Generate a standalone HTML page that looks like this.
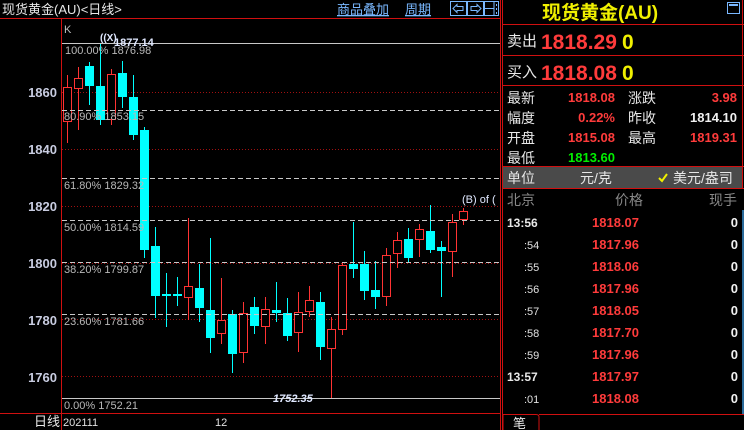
<!DOCTYPE html>
<html><head><meta charset="utf-8"><style>
html,body{margin:0;padding:0;background:#000;width:744px;height:430px;overflow:hidden}
svg{display:block}
text{font-family:"Liberation Sans","Noto Sans CJK SC",sans-serif}
.cn{font-family:"Liberation Sans","Noto Sans CJK SC",sans-serif}
</style></head><body>
<svg width="744" height="430" viewBox="0 0 744 430" xmlns="http://www.w3.org/2000/svg">
<rect width="744" height="430" fill="#000"/>
<!-- header left -->
<text x="2" y="14" fill="#e8e8e8" font-size="13" class="cn">现货黄金(AU)&lt;日线&gt;</text>
<text x="337" y="14" fill="#7ab8ff" font-size="13" class="cn" text-decoration="underline">商品叠加</text>
<text x="405" y="14" fill="#7ab8ff" font-size="13" class="cn" text-decoration="underline">周期</text>
<g fill="none" stroke="#7ab8ff" stroke-width="1">
<rect x="450.5" y="1.5" width="16" height="14"/>
<rect x="467.5" y="1.5" width="16" height="14"/>
<rect x="484.5" y="1.5" width="14" height="14"/>
<path d="M453 8.5 L457 4.5 V6.5 H463 V10.5 H457 V12.5 Z"/>
<path d="M481 8.5 L477 4.5 V6.5 H471 V10.5 H477 V12.5 Z"/>
<path d="M485 8.5 H494 M494 2 V15"/>
<path d="M496.5 4 V6 M496.5 8 V10 M496.5 12 V14"/>
</g>
<!-- frames -->
<line x1="0" y1="18.5" x2="500" y2="18.5" stroke="#d01010"/>
<line x1="61.5" y1="19" x2="61.5" y2="430" stroke="#d01010"/>
<line x1="0" y1="413.5" x2="500" y2="413.5" stroke="#d01010"/>
<line x1="500.5" y1="0" x2="500.5" y2="430" stroke="#d01010"/>
<line x1="502.5" y1="0" x2="502.5" y2="430" stroke="#d01010"/>
<!-- price grid -->
<g stroke="#a01010" stroke-dasharray="1,2">
<line x1="62" y1="92.5" x2="500" y2="92.5"/>
<line x1="62" y1="149.5" x2="500" y2="149.5"/>
<line x1="62" y1="206.5" x2="500" y2="206.5"/>
<line x1="62" y1="263.5" x2="500" y2="263.5"/>
<line x1="62" y1="319.5" x2="500" y2="319.5"/>
<line x1="62" y1="376.5" x2="500" y2="376.5"/>
</g>
<g fill="#c8cce0" font-size="13" font-weight="bold" text-anchor="end">
<text x="57" y="97">1860</text><text x="57" y="154">1840</text><text x="57" y="211">1820</text>
<text x="57" y="268">1800</text><text x="57" y="325">1780</text><text x="57" y="382">1760</text>
</g>
<text x="64" y="33" fill="#c0c0c0" font-size="11">K</text>
<!-- candles -->
<g stroke-width="1">
<g stroke="#ff3333"><line x1="67.5" y1="75" x2="67.5" y2="143"/><rect x="63.5" y="87.5" width="8" height="34" fill="#000"/></g>
<g stroke="#ff3333"><line x1="78.5" y1="67" x2="78.5" y2="130"/><rect x="74.5" y="78.5" width="8" height="10" fill="#000"/></g>
<g stroke="#00ffff"><line x1="89.5" y1="62" x2="89.5" y2="105"/></g><rect x="85" y="66" width="9" height="20" fill="#00ffff"/>
<g stroke="#00ffff"><line x1="100.5" y1="43" x2="100.5" y2="125"/></g><rect x="96" y="86" width="9" height="34" fill="#00ffff"/>
<g stroke="#ff3333"><line x1="111.5" y1="69" x2="111.5" y2="125"/><rect x="107.5" y="74.5" width="8" height="45" fill="#000"/></g>
<g stroke="#00ffff"><line x1="122.5" y1="61" x2="122.5" y2="108"/></g><rect x="118" y="73" width="9" height="24" fill="#00ffff"/>
<g stroke="#00ffff"><line x1="133.5" y1="75" x2="133.5" y2="140"/></g><rect x="129" y="97" width="9" height="38" fill="#00ffff"/>
<g stroke="#00ffff"><line x1="144.5" y1="127" x2="144.5" y2="258"/></g><rect x="140" y="130" width="9" height="120" fill="#00ffff"/>
<g stroke="#00ffff"><line x1="155.5" y1="227" x2="155.5" y2="318"/></g><rect x="151" y="246" width="9" height="50" fill="#00ffff"/>
<g stroke="#00ffff"><line x1="166.5" y1="273" x2="166.5" y2="327"/></g><rect x="162" y="294" width="9" height="2" fill="#00ffff"/>
<g stroke="#00ffff"><line x1="177.5" y1="277" x2="177.5" y2="306"/></g><rect x="173" y="294" width="9" height="2" fill="#00ffff"/>
<g stroke="#ff3333"><line x1="188.5" y1="218" x2="188.5" y2="320"/><rect x="184.5" y="286.5" width="8" height="11" fill="#000"/></g>
<g stroke="#00ffff"><line x1="199.5" y1="264" x2="199.5" y2="322"/></g><rect x="195" y="288" width="9" height="20" fill="#00ffff"/>
<g stroke="#00ffff"><line x1="210.5" y1="238" x2="210.5" y2="353"/></g><rect x="206" y="310" width="9" height="28" fill="#00ffff"/>
<g stroke="#ff3333"><line x1="221.5" y1="278" x2="221.5" y2="344"/><rect x="217.5" y="320.5" width="8" height="13" fill="#000"/></g>
<g stroke="#00ffff"><line x1="232.5" y1="310" x2="232.5" y2="373"/></g><rect x="228" y="314" width="9" height="40" fill="#00ffff"/>
<g stroke="#ff3333"><line x1="243.5" y1="302" x2="243.5" y2="363"/><rect x="239.5" y="313.5" width="8" height="39" fill="#000"/></g>
<g stroke="#00ffff"><line x1="254.5" y1="297" x2="254.5" y2="334"/></g><rect x="250" y="307" width="9" height="19" fill="#00ffff"/>
<g stroke="#ff3333"><line x1="265.5" y1="297" x2="265.5" y2="344"/><rect x="261.5" y="309.5" width="8" height="17" fill="#000"/></g>
<g stroke="#00ffff"><line x1="276.5" y1="282" x2="276.5" y2="322"/></g><rect x="272" y="310" width="9" height="3" fill="#00ffff"/>
<g stroke="#00ffff"><line x1="287.5" y1="298" x2="287.5" y2="341"/></g><rect x="283" y="313" width="9" height="23" fill="#00ffff"/>
<g stroke="#ff3333"><line x1="298.5" y1="292" x2="298.5" y2="352"/><rect x="294.5" y="312.5" width="8" height="20" fill="#000"/></g>
<g stroke="#ff3333"><line x1="309.5" y1="286" x2="309.5" y2="317"/><rect x="305.5" y="300.5" width="8" height="11" fill="#000"/></g>
<g stroke="#00ffff"><line x1="320.5" y1="292" x2="320.5" y2="360"/></g><rect x="316" y="302" width="9" height="45" fill="#00ffff"/>
<g stroke="#ff3333"><line x1="331.5" y1="317" x2="331.5" y2="399"/><rect x="327.5" y="329.5" width="8" height="19" fill="#000"/></g>
<g stroke="#ff3333"><line x1="342.5" y1="262" x2="342.5" y2="335"/><rect x="338.5" y="265.5" width="8" height="64" fill="#000"/></g>
<g stroke="#00ffff"><line x1="353.5" y1="222" x2="353.5" y2="278"/></g><rect x="349" y="264" width="9" height="5" fill="#00ffff"/>
<g stroke="#00ffff"><line x1="364.5" y1="251" x2="364.5" y2="300"/></g><rect x="360" y="264" width="9" height="27" fill="#00ffff"/>
<g stroke="#00ffff"><line x1="375.5" y1="261" x2="375.5" y2="309"/></g><rect x="371" y="290" width="9" height="7" fill="#00ffff"/>
<g stroke="#ff3333"><line x1="386.5" y1="248" x2="386.5" y2="306"/><rect x="382.5" y="255.5" width="8" height="41" fill="#000"/></g>
<g stroke="#ff3333"><line x1="397.5" y1="232" x2="397.5" y2="268"/><rect x="393.5" y="240.5" width="8" height="13" fill="#000"/></g>
<g stroke="#00ffff"><line x1="408.5" y1="228" x2="408.5" y2="262"/></g><rect x="404" y="239" width="9" height="19" fill="#00ffff"/>
<g stroke="#ff3333"><line x1="419.5" y1="224" x2="419.5" y2="257"/><rect x="415.5" y="229.5" width="8" height="10" fill="#000"/></g>
<g stroke="#00ffff"><line x1="430.5" y1="205" x2="430.5" y2="253"/></g><rect x="426" y="231" width="9" height="19" fill="#00ffff"/>
<g stroke="#00ffff"><line x1="441.5" y1="241" x2="441.5" y2="297"/></g><rect x="437" y="247" width="9" height="4" fill="#00ffff"/>
<g stroke="#ff3333"><line x1="452.5" y1="214" x2="452.5" y2="277"/><rect x="448.5" y="222.5" width="8" height="29" fill="#000"/></g>
<g stroke="#ff3333"><line x1="463.5" y1="208" x2="463.5" y2="225"/><rect x="459.5" y="211.5" width="8" height="8" fill="#000"/></g>
</g>
<!-- fib lines -->
<line x1="62" y1="43.5" x2="500" y2="43.5" stroke="#c8c8c8"/>
<line x1="62" y1="398.5" x2="500" y2="398.5" stroke="#c8c8c8"/>
<g stroke="#c8c8c8" stroke-dasharray="5,3">
<line x1="62" y1="110.5" x2="500" y2="110.5"/>
<line x1="62" y1="178.5" x2="500" y2="178.5"/>
<line x1="62" y1="220.5" x2="500" y2="220.5"/>
<line x1="62" y1="262.5" x2="500" y2="262.5"/>
<line x1="62" y1="314.5" x2="500" y2="314.5"/>
</g>
<g fill="#b8b8b8" font-size="11">
<text x="65" y="54">100.00% 1876.98</text>
<text x="64" y="120">80.90% 1853.15</text>
<text x="64" y="189">61.80% 1829.32</text>
<text x="64" y="231">50.00% 1814.59</text>
<text x="64" y="273">38.20% 1799.87</text>
<text x="64" y="325">23.60% 1781.66</text>
<text x="64" y="409">0.00% 1752.21</text>
</g>
<text x="100" y="41" fill="#e0e8ff" font-size="10" font-weight="bold">((X)</text>
<text x="114" y="46" fill="#e0e8ff" font-size="11" font-weight="bold">1877.14</text>
<text x="273" y="402" fill="#e0e8ff" font-size="11" font-weight="bold" font-style="italic">1752.35</text>
<text x="462" y="203" fill="#e0e8ff" font-size="11">(B) of (</text>
<!-- bottom -->
<text x="34" y="426" fill="#e8e8e8" font-size="13" class="cn">日线</text>
<text x="63" y="426" fill="#e0e0e0" font-size="11">202111</text>
<text x="215" y="426" fill="#e0e0e0" font-size="11">12</text>
<!-- right panel -->
<text x="600" y="19" fill="#f0f000" font-size="19" font-weight="bold" text-anchor="middle" font-family="'Liberation Serif','Noto Serif CJK SC',serif">现货黄金(AU)</text>
<rect x="727.5" y="2.5" width="12" height="11" fill="none" stroke="#7ab8ff"/>
<line x1="729" y1="5" x2="738" y2="5" stroke="#7ab8ff" stroke-width="2"/>
<g stroke="#d01010">
<line x1="503" y1="24.5" x2="744" y2="24.5"/>
<line x1="503" y1="55.5" x2="744" y2="55.5"/>
<line x1="503" y1="85.5" x2="744" y2="85.5"/>
<line x1="503" y1="166.5" x2="744" y2="166.5"/>
<line x1="503" y1="188.5" x2="744" y2="188.5"/>
<line x1="742.5" y1="0" x2="742.5" y2="188"/>
</g>
<rect x="503" y="167" width="239" height="21" fill="#4a4a4a"/>
<text x="507" y="46" fill="#e8e8e8" font-size="15" class="cn">卖出</text>
<text x="541" y="49" fill="#ff3b3b" font-size="21" font-weight="bold">1818.29</text>
<text x="622" y="49" fill="#f0f000" font-size="21" font-weight="bold">0</text>
<text x="507" y="77" fill="#e8e8e8" font-size="15" class="cn">买入</text>
<text x="541" y="80" fill="#ff3b3b" font-size="21" font-weight="bold">1818.08</text>
<text x="622" y="80" fill="#f0f000" font-size="21" font-weight="bold">0</text>
<g font-size="14" class="cn" fill="#e8e8e8">
<text x="507" y="103">最新</text><text x="507" y="123">幅度</text><text x="507" y="143">开盘</text><text x="507" y="163">最低</text>
<text x="628" y="103">涨跌</text><text x="628" y="123">昨收</text><text x="628" y="143">最高</text>
</g>
<g font-size="13" font-weight="bold" text-anchor="end">
<text x="615" y="102" fill="#ff3b3b">1818.08</text>
<text x="615" y="122" fill="#ff3b3b">0.22%</text>
<text x="615" y="142" fill="#ff3b3b">1815.08</text>
<text x="615" y="162" fill="#00ee00">1813.60</text>
<text x="737" y="102" fill="#ff3b3b">3.98</text>
<text x="737" y="122" fill="#f0f0f0">1814.10</text>
<text x="737" y="142" fill="#ff3b3b">1819.31</text>
</g>
<g font-size="14" class="cn" fill="#e8e8e8">
<text x="507" y="183">单位</text>
<text x="580" y="183">元/克</text>
<text x="673" y="183">美元/盎司</text>
</g>
<path d="M659 178 L662 181 L667 174" stroke="#f0f000" stroke-width="2" fill="none"/>
<g font-size="14" class="cn" fill="#888">
<text x="507" y="205">北京</text><text x="615" y="205">价格</text><text x="709" y="205">现手</text>
</g>
<g font-size="12" font-weight="bold" fill="#e8e8e8">
<text x="507" y="227">13:56</text><text x="507" y="381">13:57</text>
</g>
<g font-size="11" fill="#e0e0e0">
<text x="524" y="249">:54</text><text x="524" y="271">:55</text><text x="524" y="293">:56</text>
<text x="524" y="315">:57</text><text x="524" y="337">:58</text><text x="524" y="359">:59</text>
<text x="524" y="403">:01</text>
</g>
<g font-size="13" font-weight="bold" fill="#ff3b3b">
<text x="592" y="227">1818.07</text><text x="592" y="249">1817.96</text><text x="592" y="271">1818.06</text>
<text x="592" y="293">1817.96</text><text x="592" y="315">1818.05</text><text x="592" y="337">1817.70</text>
<text x="592" y="359">1817.96</text><text x="592" y="381">1817.97</text><text x="592" y="403">1818.08</text>
</g>
<g font-size="13" font-weight="bold" fill="#f0f0f0" text-anchor="end">
<text x="738" y="227">0</text><text x="738" y="249">0</text><text x="738" y="271">0</text>
<text x="738" y="293">0</text><text x="738" y="315">0</text><text x="738" y="337">0</text>
<text x="738" y="359">0</text><text x="738" y="381">0</text><text x="738" y="403">0</text>
</g>
<rect x="742" y="210" width="2" height="204" fill="#2a6a9a"/>
<path d="M503 430 V414.5 H536 Q539 414.5 539 417 V430 M539 414.5 H744" stroke="#d01010" fill="none"/>
<text x="513" y="428" fill="#e8e8e8" font-size="13" class="cn">笔</text>
</svg>
</body></html>
